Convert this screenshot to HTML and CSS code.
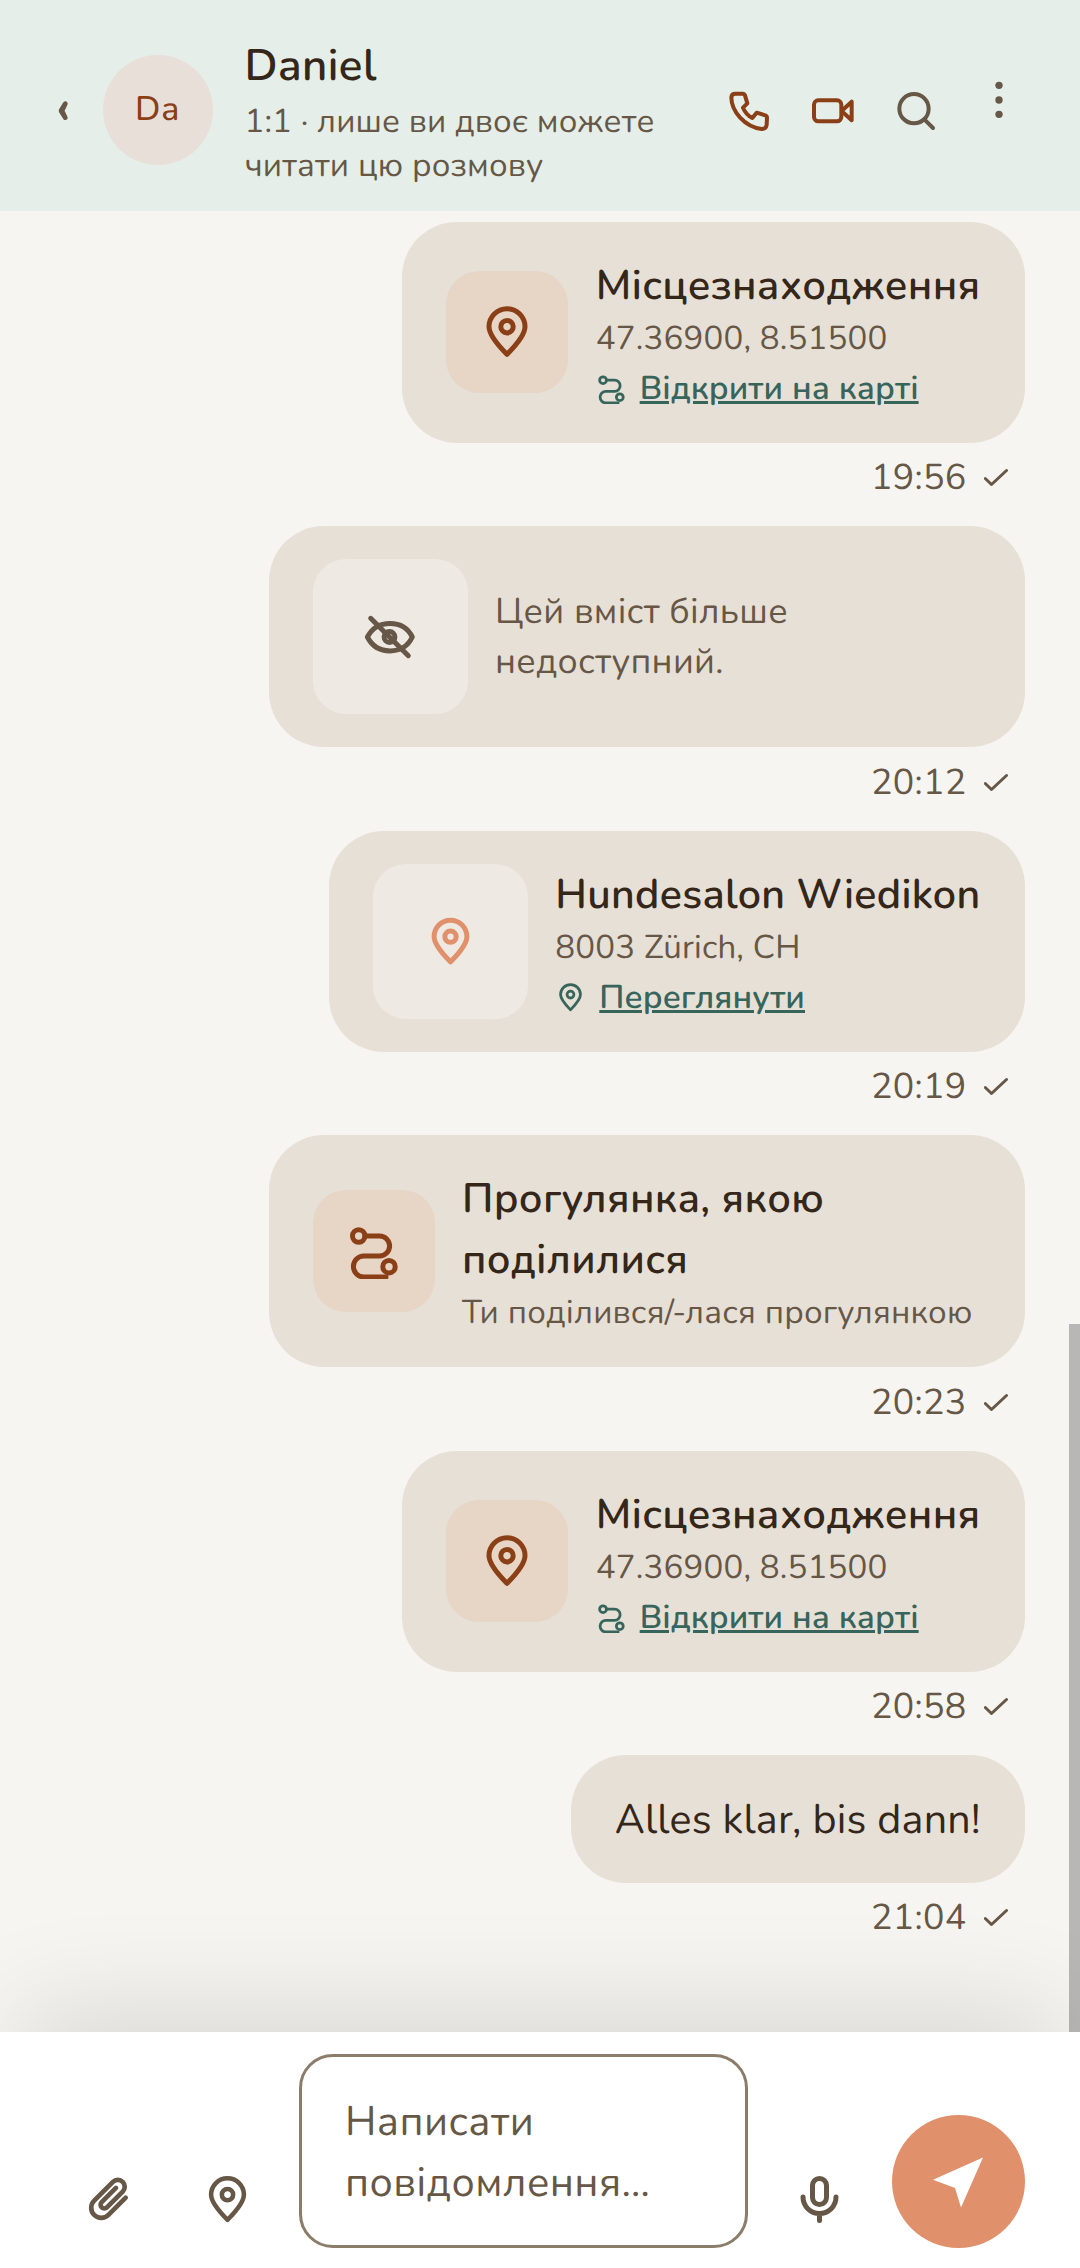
FILE: index.html
```
<!DOCTYPE html>
<html lang="uk">
<head>
<meta charset="utf-8">
<title>Daniel</title>
<link rel="stylesheet" href="styles.css">
</head>
<body>
<svg class="defs" aria-hidden="true">
  <symbol id="pin" viewBox="-28 -22.7 56 56"><path d="M0 27.6C-6 21.5-18 9.5-18 0a18 18 0 0 1 36 0C18 9.500 6 21.500 0 27.600Z"/><circle r="6.200"/></symbol>
  <symbol id="route" viewBox="11 13.300 56 56" overflow="visible"><circle cx="23.700" cy="26.300" r="6.200"/><path d="M30 26.300H44.600a10 10 0 0 1 0 20H28.900a10.500 10.500 0 0 0 0 21H51"/><circle cx="54" cy="57" r="6.200"/></symbol>
  <symbol id="check" viewBox="0 0 24 20"><path d="M1.300 10.500 7.500 16.500 22.500 2.500"/></symbol>
</svg>
<div class="app">
  <header class="header">
    <span class="back">‹</span>
    <div class="avatar">Da</div>
    <div class="peer">
      <div class="name">Daniel</div>
      <div class="note">1:1 · лише ви двоє можете читати цю розмову</div>
    </div>
    <div class="actions">
      <button class="action rust"><svg class="icon" viewBox="130 136 156 156"><path d="M167 162H189Q194 162 196 167L203 191 190 204Q199 225 218 235L231 219 257 227Q262 229 262 234L261 256Q259 268 246 268C195 262 155 215 155 173Q156 162 167 162Z"/></svg></button>
      <button class="action rust"><svg class="icon" viewBox="383 134 156 156"><rect x="404" y="180" width="82" height="63" rx="13"/><path d="M490 209 517 184V240L490 215"/></svg></button>
      <button class="action"><svg class="icon" viewBox="632 134 156 156"><circle cx="704" cy="205" r="44"/><path d="M738 240 761 263"/></svg></button>
      <button class="action"><svg class="icon dots" viewBox="881 134 156 156"><circle cx="959" cy="135" r="11"/><circle cx="959" cy="179" r="11"/><circle cx="959" cy="222" r="11"/></svg></button>
    </div>
  </header>

  <main class="messages">
    <article class="bubble">
      <div class="tile rust"><svg><use href="#pin"/></svg></div>
      <div class="info">
        <div class="title">Місцезнаходження</div>
        <div class="sub">47.36900, 8.51500</div>
        <div class="link"><svg><use href="#route"/></svg><a>Відкрити на карті</a></div>
      </div>
    </article>
    <div class="meta">19:56<svg><use href="#check"/></svg></div>

    <article class="bubble">
      <div class="tile large"><svg viewBox="8 4 56 56"><path d="M13.400 32C18 23 26 18.400 36 18.400S54 23 58.300 32C54 41 46 45.900 36 45.900S18 41 13.400 32ZM16.700 13.300 54.300 50.700"/><circle cx="35.500" cy="32" r="5.400"/></svg></div>
      <p class="gone">Цей вміст більше недоступний.</p>
    </article>
    <div class="meta">20:12<svg><use href="#check"/></svg></div>

    <article class="bubble">
      <div class="tile large coral"><svg><use href="#pin"/></svg></div>
      <div class="info">
        <div class="title">Hundesalon Wiedikon</div>
        <div class="sub">8003 Zürich, CH</div>
        <div class="link"><svg><use href="#pin"/></svg><a>Переглянути</a></div>
      </div>
    </article>
    <div class="meta">20:19<svg><use href="#check"/></svg></div>

    <article class="bubble">
      <div class="tile rust"><svg><use href="#route"/></svg></div>
      <div class="info">
        <div class="title">Прогулянка, якою поділилися</div>
        <div class="sub">Ти поділився/-лася прогулянкою</div>
      </div>
    </article>
    <div class="meta">20:23<svg><use href="#check"/></svg></div>

    <article class="bubble">
      <div class="tile rust"><svg><use href="#pin"/></svg></div>
      <div class="info">
        <div class="title">Місцезнаходження</div>
        <div class="sub">47.36900, 8.51500</div>
        <div class="link"><svg><use href="#route"/></svg><a>Відкрити на карті</a></div>
      </div>
    </article>
    <div class="meta">20:58<svg><use href="#check"/></svg></div>

    <article class="bubble plain">Alles klar, bis dann!</article>
    <div class="meta">21:04<svg><use href="#check"/></svg></div>
    <div class="scrollbar"></div>
  </main>

  <footer class="composer">
    <button class="tool"><svg viewBox="0 0 24 24"><path class="clip" transform="rotate(45 12.500 12)" d="M17.250 6V17.500a4.750 4.750 0 0 1-9.500 0V5a3.250 3.250 0 0 1 6.500 0V15.500a1.750 1.750 0 0 1-3.500 0V6"/></svg></button>
    <button class="tool"><svg><use href="#pin"/></svg></button>
    <div class="field">Написати повідомлення…</div>
    <button class="tool mic"><svg viewBox="-25.500 -25.500 51 51"><rect x="-7" y="-21" width="14" height="26" rx="7"/><path d="M-16.500-2.500a16.500 16.500 0 0 0 33 0M0 15V21"/></svg></button>
    <button class="send"><svg viewBox="-28 -28 56 56"><path d="M-25-2.200 25-24.500 3 25.500-3 6Z"/></svg></button>
  </footer>
</div>
</body>
</html>
```
FILE: styles.css
```
* { box-sizing: border-box; }

body {
  margin: 0;
  font-family: Nunito, "Noto Sans", sans-serif;
  text-rendering: geometricPrecision;
  color: #34271a;
  background: #f7f5f1;
}

button {
  padding: 0;
  border: 0;
  background: none;
  color: inherit;
  font: inherit;
}

svg {
  display: block;
  flex: none;
  fill: none;
  stroke: currentColor;
  stroke-width: 5;
  stroke-linecap: round;
  stroke-linejoin: round;
}

.defs { position: absolute; width: 0; height: 0; }

.app {
  width: 1080px;
  height: 2268px;
  display: flex;
  flex-direction: column;
  overflow: hidden;
}

/* Header */
.header {
  height: 210.500px;
  flex: none;
  display: flex;
  align-items: center;
  padding: 11px 39px 0 55px;
  background: #e5eee8;
  color: #665746;
}

.back {
  width: 47.500px;
  padding-left: 1px;
  font-size: 50px;
  font-weight: 700;
  line-height: 60px;
}

.avatar {
  width: 110px;
  height: 110px;
  border-radius: 50%;
  background: #e8e0d8;
  color: #8b3f17;
  font-size: 34px;
  font-weight: 500;
  letter-spacing: 0.800px;
  display: flex;
  align-items: center;
  justify-content: center;
}

.header .back { margin-bottom: 6px; }

.avatar { margin-bottom: 1px; }

.peer {
  flex: 1;
  margin-left: 32px;
}

.name {
  font-size: 44px;
  line-height: 66px;
  font-weight: 600;
  letter-spacing: 0.410px;
  color: #34271a;
}

.note {
  padding-top: 1px;
  font-size: 33px;
  line-height: 44.300px;
  letter-spacing: 0.150px;
}

.actions { display: flex; }

.action {
  width: 83.300px;
  height: 83px;
  display: flex;
  align-items: center;
  justify-content: center;
}

.icon { width: 52px; height: 52px; stroke-width: 12; overflow: visible; }
.icon.dots { fill: currentColor; stroke: none; }
.rust { color: #8b3f17; }

/* Messages */
.messages {
  position: relative;
  flex: 1;
  display: flex;
  flex-direction: column;
  align-items: flex-end;
  padding: 11px 55.500px 0;
}

.bubble {
  flex: none;
  max-width: 756px;
  min-height: 221px;
  display: flex;
  align-items: center;
  gap: 27.500px;
  padding: 32px 44px;
  border-radius: 55px;
  background: #e7e0d7;
}

.tile {
  flex: none;
  width: 122px;
  height: 122px;
  border-radius: 33px;
  background: #e7d5c6;
  display: flex;
  align-items: center;
  justify-content: center;
}

.tile svg { width: 56px; height: 56px; }

.large {
  width: 155px;
  height: 155px;
  background: #efe9e3;
  color: #665746;
}

.coral { color: #e0906b; }
.coral svg { width: 51px; height: 51px; stroke-width: 5.500; }

.info { padding-top: 2px; }

.title {
  font-size: 41.250px;
  line-height: 60.500px;
  font-weight: 600;
  letter-spacing: 0.300px;
}

.sub {
  font-size: 33px;
  line-height: 45px;
  letter-spacing: 0.200px;
  white-space: nowrap;
  color: #665746;
}

.link {
  display: flex;
  align-items: center;
  gap: 13px;
  padding-top: 4.500px;
  font-size: 33px;
  line-height: 45px;
  font-weight: 600;
  letter-spacing: 0.100px;
  color: #38655b;
}

.link a { text-decoration: underline; text-decoration-thickness: 2.750px; }
.link svg { width: 31px; height: 31px; }

.gone {
  margin: 0;
  font-size: 35.750px;
  line-height: 49.500px;
  letter-spacing: 0.300px;
  color: #665746;
}

.plain {
  min-height: 127.500px;
  padding-top: 34px;
  font-size: 41.250px;
  line-height: 60.500px;
  letter-spacing: 0.200px;
}

.meta {
  flex: none;
  height: 83.500px;
  display: flex;
  gap: 17px;
  padding: 10.500px 17px 23px 0;
  align-items: center;
  font-size: 35.750px;
  line-height: 50px;
  letter-spacing: 0.300px;
  color: #665746;
}

.meta svg { width: 24px; height: 20px; stroke-width: 3; }

.scrollbar {
  position: absolute;
  right: 0;
  bottom: 0;
  width: 11px;
  height: 708px;
  background: #b8b7b5;
}

/* Composer */
.composer {
  position: relative;
  height: 236px;
  flex: none;
  display: flex;
  align-items: flex-end;
  padding: 0 55.500px 20px 49px;
  background: #fff;
  color: #665746;
  box-shadow: 0 -40px 110px -20px rgba(0, 0, 0, 0.120);
}

.tool {
  width: 119px;
  height: 98px;
  display: flex;
  align-items: center;
  justify-content: center;
}

.tool svg { width: 51px; height: 51px; }
.tool .clip { stroke-width: 2.200; }
.mic { margin: 0 13px 0 12px; }

.field {
  flex: 1;
  height: 194px;
  margin-left: 12px;
  padding: 35px 43px;
  border: 3px solid #8b7d69;
  border-radius: 34px;
  font-size: 41.250px;
  line-height: 60.700px;
  letter-spacing: 0.410px;
}

.send {
  width: 133px;
  height: 133px;
  border-radius: 50%;
  background: #e0906b;
  display: flex;
  align-items: center;
  justify-content: center;
}

.send svg { width: 56px; height: 56px; fill: #fff; stroke: none; }
```
